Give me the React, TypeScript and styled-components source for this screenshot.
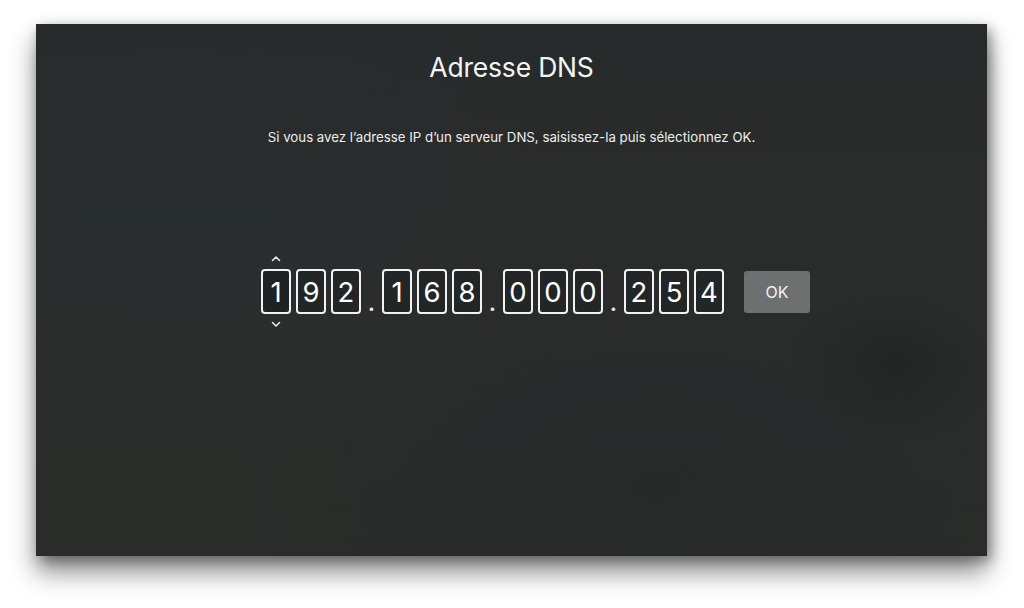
import React from "react"
import styled, { createGlobalStyle } from "styled-components"

const GlobalStyle = createGlobalStyle`
  html, body {
    margin: 0;
    padding: 0;
    background: #ffffff;
  }
  body {
    font-family: Inter, "Liberation Sans", Arial, sans-serif;
    -webkit-font-smoothing: antialiased;
  }
`

const octets = ["192", "168", "000", "254"]

export default function App() {
  return (
    <>
      <GlobalStyle />
      <Page>
        <Screen>
          <Title>Adresse DNS</Title>
          <Hint>Si vous avez l’adresse IP d’un serveur DNS, saisissez-la puis sélectionnez OK.</Hint>
          <EntryRow>
            {octets.map((octet, groupIndex) => (
              <React.Fragment key={groupIndex}>
                {groupIndex > 0 && <Dot>.</Dot>}
                {octet.split("").map((digit, i) => {
                  const focused = groupIndex === 0 && i === 0
                  return (
                    <DigitBox key={i} $focused={focused}>
                      {focused && (
                        <>
                          <Chevron $side="up" width="10" height="7" viewBox="0 0 10 7">
                            <path d="M1.5 5.5 L5 2 L8.5 5.5" />
                          </Chevron>
                          <Chevron $side="down" width="10" height="7" viewBox="0 0 10 7">
                            <path d="M1.5 1.5 L5 5 L8.5 1.5" />
                          </Chevron>
                        </>
                      )}
                      {digit}
                    </DigitBox>
                  )
                })}
              </React.Fragment>
            ))}
            <OkButton>OK</OkButton>
          </EntryRow>
        </Screen>
      </Page>
    </>
  )
}

const Page = styled.div`
  width: 1024px;
  height: 608px;
  padding: 24px 0 0 36px;
  box-sizing: border-box;
  overflow: hidden;
`

const Screen = styled.div`
  width: 951px;
  height: 532px;
  display: flex;
  flex-direction: column;
  align-items: center;
  background:
    radial-gradient(ellipse 110px 80px at 860px 340px, rgba(20, 22, 22, 0.3), transparent),
    radial-gradient(ellipse 380px 260px at 140px 120px, rgba(40, 48, 52, 0.35), transparent),
    radial-gradient(ellipse 420px 260px at 620px 460px, rgba(30, 36, 38, 0.35), transparent),
    linear-gradient(180deg, #272a2a 0%, #2b2d2c 55%, #2a2c2a 100%);
  box-shadow:
    0 16px 24px rgba(0, 0, 0, 0.45),
    4px 4px 12px rgba(0, 0, 0, 0.35);
  color: #ffffff;
`

const Title = styled.h1`
  margin: 26px 0 0;
  font-size: 26.5px;
  font-weight: 400;
  line-height: 34px;
  letter-spacing: -0.2px;
  color: #f4f4f4;
`

const Hint = styled.p`
  margin: 44px 0 0;
  font-size: 13.25px;
  line-height: 18px;
  color: #eeeeee;
`

const EntryRow = styled.div`
  display: flex;
  align-items: center;
  gap: 5px;
  margin: 123px 0 0 48px;
`

const DigitBox = styled.div<{ $focused: boolean }>`
  position: relative;
  width: 30px;
  height: 45px;
  box-sizing: border-box;
  border: 2px solid #f2f2f2;
  border-radius: 4px;
  background: ${p => (p.$focused ? "#1f2222" : "#232626")};
  display: flex;
  align-items: center;
  justify-content: center;
  font-size: 27.5px;
  color: #ffffff;
`

const Chevron = styled.svg<{ $side: "up" | "down" }>`
  position: absolute;
  left: 50%;
  margin-left: -5px;
  ${p => (p.$side === "up" ? "top: -16px;" : "bottom: -16px;")}
  fill: none;
  stroke: #e8e8e8;
  stroke-width: 1.6;
  stroke-linecap: round;
  stroke-linejoin: round;
`

const Dot = styled.span`
  width: 11px;
  align-self: flex-end;
  margin-bottom: 2px;
  text-align: center;
  font-size: 27px;
  line-height: 20px;
  color: #e6e6e6;
`

const OkButton = styled.button`
  margin-left: 15px;
  width: 66px;
  height: 42px;
  border: none;
  border-radius: 3px;
  background: #6d7070;
  color: #f2f2f2;
  font-family: Inter, "Liberation Sans", Arial, sans-serif;
  font-size: 16px;
`
